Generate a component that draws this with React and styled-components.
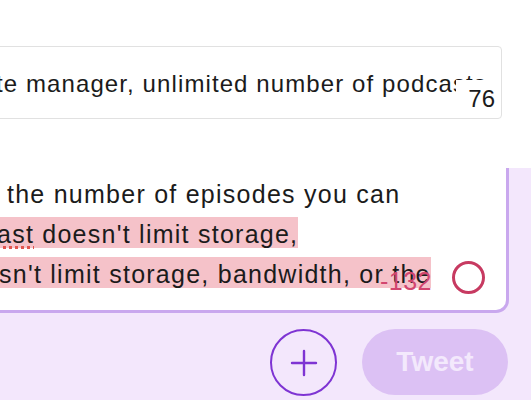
import React from "react";
import styled, { createGlobalStyle } from "styled-components";

const GlobalStyle = createGlobalStyle`
  html, body {
    margin: 0;
    padding: 0;
    background: #ffffff;
    overflow: hidden;
  }
  body {
    font-family: "Liberation Sans", Arial, sans-serif;
    color: #1b1b1b;
  }
`;

const Page = styled.div`
  width: 531px;
  height: 400px;
  overflow: hidden;
  display: flex;
  flex-direction: column;
`;

const TopSection = styled.div`
  height: 168px;
  box-sizing: border-box;
  padding-top: 46px;
  background: #ffffff;
`;

const InputBox = styled.div`
  position: relative;
  height: 73px;
  box-sizing: border-box;
  margin-left: -12px;
  margin-right: 29px;
  border: 1px solid #e1e1e1;
  border-radius: 4px;
  display: flex;
  align-items: center;
  overflow: hidden;
`;

const InputText = styled.div`
  white-space: nowrap;
  font-size: 24px;
  letter-spacing: 1.1px;
  margin-left: 7px;
  padding-top: 2px;
`;

const Count = styled.span`
  position: absolute;
  right: 2px;
  top: 33px;
  padding: 6px 4px 2px 12px;
  background: #ffffff;
  font-size: 24px;
  line-height: 26px;
  color: #1b1b1b;
`;

const ComposeSection = styled.div`
  flex: 1;
  background: #f3e7fc;
  padding-right: 22px;
`;

const Card = styled.div`
  position: relative;
  height: 145px;
  box-sizing: border-box;
  margin-left: -12px;
  padding-top: 6px;
  padding-left: 12px;
  background: #ffffff;
  border-right: 3px solid #c9a8ee;
  border-bottom: 3px solid #c9a8ee;
  border-bottom-right-radius: 13px;
  font-size: 25px;
  letter-spacing: 1.25px;
  line-height: 40px;
  white-space: nowrap;
  overflow: hidden;
`;

const Line = styled.div`
  margin-left: ${(p) => p.indent || 0}px;
`;

const Mark = styled.span`
  background: #f5c2c9;
  padding-top: 3px;
`;

const Misspelt = styled.span`
  text-decoration: underline dotted #e2564f;
  text-decoration-thickness: 3px;
  text-underline-offset: 3px;
`;

const Over = styled.span`
  position: absolute;
  right: 74px;
  top: 93px;
  font-size: 25px;
  letter-spacing: 0.5px;
  line-height: 40px;
  color: #d2466f;
`;

const Ring = styled.span`
  position: absolute;
  right: 21px;
  top: 93px;
  width: 27px;
  height: 27px;
  border: 3.5px solid #c73a61;
  border-radius: 50%;
`;

const Actions = styled.div`
  display: flex;
  justify-content: flex-end;
  gap: 25px;
  margin-top: 16px;
  margin-right: 1px;
`;

const AddButton = styled.button`
  width: 67px;
  height: 67px;
  box-sizing: border-box;
  border: 2px solid #7e34d3;
  border-radius: 50%;
  background: transparent;
  display: flex;
  align-items: center;
  justify-content: center;
  padding: 0;
`;

const TweetButton = styled.button`
  width: 146px;
  height: 66px;
  border: none;
  border-radius: 33px;
  background: #dcc1f4;
  color: #f3e9fc;
  font-family: "Liberation Sans", Arial, sans-serif;
  font-weight: 700;
  font-size: 28px;
`;

export default function App() {
  return (
    <>
      <GlobalStyle />
      <Page>
        <TopSection>
          <InputBox>
            <InputText>
              te manager, unlimited number of podcasts
            </InputText>
            <Count>76</Count>
          </InputBox>
        </TopSection>
        <ComposeSection>
          <Card>
            <Line indent={7}>the number of episodes you can</Line>
            <Line indent={-3}>
              <Mark>
                <Misspelt>ast</Misspelt> doesn't limit storage,{" "}
              </Mark>
            </Line>
            <Line indent={-1}>
              <Mark>sn't limit storage, bandwidth, or the</Mark>
            </Line>
            <Over>-132</Over>
            <Ring />
          </Card>
          <Actions>
            <AddButton aria-label="Add tweet">
              <svg width="28" height="28" viewBox="0 0 28 28">
                <path
                  d="M14 2v24M2 14h24"
                  stroke="#7e34d3"
                  strokeWidth="2.4"
                  strokeLinecap="round"
                />
              </svg>
            </AddButton>
            <TweetButton>Tweet</TweetButton>
          </Actions>
        </ComposeSection>
      </Page>
    </>
  );
}
